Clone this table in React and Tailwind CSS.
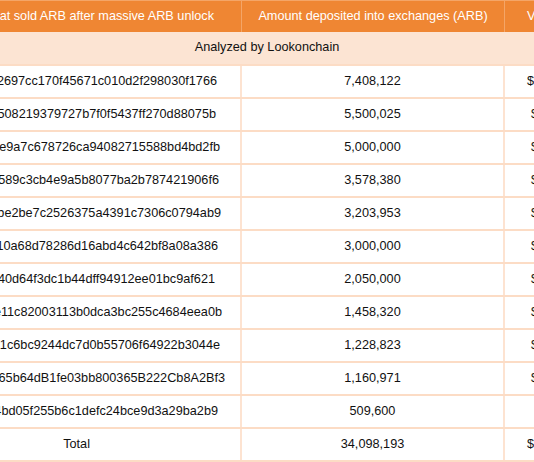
import React from 'react';

// pr = how far the (centered) address text ends from the column line
const rows = [
  { addr: '2697cc170f45671c010d2f298030f1766', amount: '7,408,122', value: '$', pr: 'pr-[23px]', wide: true },
  { addr: '508219379727b7f0f5437ff270d88075b', amount: '5,500,025', value: '$', pr: 'pr-[24px]' },
  { addr: 'e9a7c678726ca94082715588bd4bd2fb', amount: '5,000,000', value: '$', pr: 'pr-[20px]' },
  { addr: '589c3cb4e9a5b8077ba2b787421906f6', amount: '3,578,380', value: '$', pr: 'pr-[21px]' },
  { addr: 'be2be7c2526375a4391c7306c0794ab9', amount: '3,203,953', value: '$', pr: 'pr-[19px]' },
  { addr: '10a68d78286d16abd4c642bf8a08a386', amount: '3,000,000', value: '$', pr: 'pr-[22px]' },
  { addr: '40d64f3dc1b44dff94912ee01bc9af621', amount: '2,050,000', value: '$', pr: 'pr-[25px]' },
  { addr: 'e11c82003113b0dca3bc255c4684eea0b', amount: '1,458,320', value: '$', pr: 'pr-[18px]' },
  { addr: '71c6bc9244dc7d0b55706f64922b3044e', amount: '1,228,823', value: '$', pr: 'pr-[20px]' },
  { addr: '65b64dB1fe03bb800365B222Cb8A2Bf3', amount: '1,160,971', value: '$', pr: 'pr-[15px]' },
  { addr: '4bd05f255b6c1defc24bce9d3a29ba2b9', amount: '509,600', value: '', pr: 'pr-[22px]' },
];

export default function App() {
  return (
    <div
      className="w-[534px] h-[462px] overflow-hidden bg-white text-[12.7px] text-[#111]"
      style={{ fontFamily: '"Liberation Sans", Arial, sans-serif' }}
    >
      {/* header */}
      <div className="grid grid-cols-[242px_263px_29px] h-[32px] bg-[#ef8633] text-white border-t border-[#f4a567]">
        <div className="flex items-center justify-end pr-[27px] border-r border-[#f4a567] whitespace-nowrap overflow-hidden">
          at sold ARB after massive ARB unlock
        </div>
        <div className="flex items-center justify-center border-r border-[#f4a567] whitespace-nowrap">
          Amount deposited into exchanges (ARB)
        </div>
        <div className="flex items-center pl-[22px] whitespace-nowrap overflow-hidden">Value</div>
      </div>

      {/* analyzed row */}
      <div className="h-[34px] bg-[#fce4d3] border-b-2 border-[#fcdcc5] flex items-center justify-center">
        Analyzed by Lookonchain
      </div>

      {rows.map((r, i) => (
        <div key={i} className="grid grid-cols-[242px_263px_29px] h-[33px] border-b-2 border-[#fcdcc5]">
          <div className={`flex items-center justify-end ${r.pr} border-r-2 border-[#fde3d1] whitespace-nowrap overflow-hidden`}>
            {r.addr}
          </div>
          <div className="flex items-center justify-center border-r-2 border-[#fde3d1]">{r.amount}</div>
          <div className={`flex items-center whitespace-nowrap overflow-hidden ${r.wide ? 'pl-[22px]' : 'pl-[26px]'}`}>
            {r.value}
          </div>
        </div>
      ))}

      {/* total */}
      <div className="grid grid-cols-[242px_263px_29px] h-[33px] border-b-2 border-[#fcdcc5]">
        <div className="flex items-center justify-end pr-[150px] border-r-2 border-[#fde3d1]">Total</div>
        <div className="flex items-center justify-center border-r-2 border-[#fde3d1]">34,098,193</div>
        <div className="flex items-center pl-[22px] overflow-hidden">$</div>
      </div>
    </div>
  );
}
